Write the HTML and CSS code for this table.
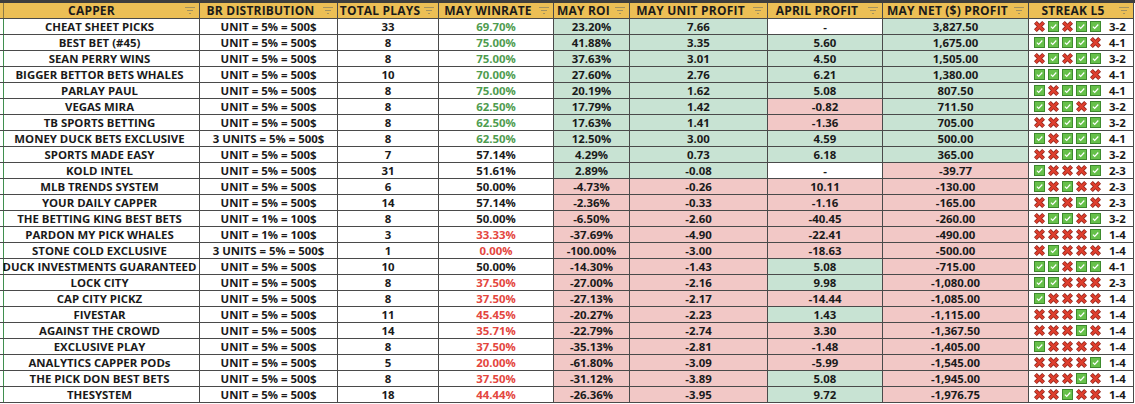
FILE: index.html
```html
<!DOCTYPE html>
<html>
<head>
<meta charset="utf-8">
<link rel="stylesheet" href="styles.css">
</head>
<body>
<svg class="defs" xmlns="http://www.w3.org/2000/svg">
  <symbol id="ck" viewBox="0 0 11 11">
    <rect x="0.5" y="0.5" width="10" height="10" fill="#66c04a" stroke="#3d8a2d"/>
    <path d="M2.9 5.7 L4.7 7.5 L8.3 3.5" fill="none" stroke="#ffffff" stroke-width="1.2"/>
  </symbol>
  <symbol id="xx" viewBox="0 0 11 11">
    <path d="M1.4 1.4 L9.6 9.6 M9.6 1.4 L1.4 9.6" stroke="#8a1f16" stroke-width="4"/>
    <path d="M1.7 1.7 L9.3 9.3 M9.3 1.7 L1.7 9.3" stroke="#de3f2e" stroke-width="2.6"/>
  </symbol>
  <symbol id="flt" viewBox="0 0 10 7">
    <path d="M0 0.5 H10 M2 3.5 H8 M4 6.5 H6" stroke="#a3925f" stroke-width="1"/>
  </symbol>
</svg>
<div class="topbar"></div>
<div class="sheet">
  <div class="row head">
    <div class="cell cap"><span class="lbl">CAPPER</span><svg class="flt"><use href="#flt"/></svg></div>
    <div class="cell"><span class="lbl">BR DISTRIBUTION</span><svg class="flt"><use href="#flt"/></svg></div>
    <div class="cell"><span class="lbl">TOTAL PLAYS</span><svg class="flt"><use href="#flt"/></svg></div>
    <div class="cell"><span class="lbl">MAY WINRATE</span><svg class="flt"><use href="#flt"/></svg></div>
    <div class="cell"><span class="lbl">MAY ROI</span><svg class="flt"><use href="#flt"/></svg></div>
    <div class="cell"><span class="lbl">MAY UNIT PROFIT</span><svg class="flt"><use href="#flt"/></svg></div>
    <div class="cell"><span class="lbl">APRIL PROFIT</span><svg class="flt"><use href="#flt"/></svg></div>
    <div class="cell"><span class="lbl">MAY NET ($) PROFIT</span><svg class="flt"><use href="#flt"/></svg></div>
    <div class="cell"><span class="lbl">STREAK L5</span><svg class="flt"><use href="#flt"/></svg></div>
  </div>

  <div class="row">
    <div class="cell cap">CHEAT SHEET PICKS</div><div class="cell">UNIT = 5% = 500$</div><div class="cell">33</div><div class="cell g">69.70%</div><div class="cell G">23.20%</div><div class="cell G">7.66</div><div class="cell">-</div><div class="cell G">3,827.50</div>
    <div class="cell streak"><svg class="ic"><use href="#xx"/></svg><svg class="ic"><use href="#ck"/></svg><svg class="ic"><use href="#xx"/></svg><svg class="ic"><use href="#ck"/></svg><svg class="ic"><use href="#ck"/></svg><span class="sc">3-2</span></div>
  </div>
  <div class="row">
    <div class="cell cap">BEST BET (#45)</div><div class="cell">UNIT = 5% = 500$</div><div class="cell">8</div><div class="cell g">75.00%</div><div class="cell G">41.88%</div><div class="cell G">3.35</div><div class="cell G">5.60</div><div class="cell G">1,675.00</div>
    <div class="cell streak"><svg class="ic"><use href="#ck"/></svg><svg class="ic"><use href="#ck"/></svg><svg class="ic"><use href="#ck"/></svg><svg class="ic"><use href="#ck"/></svg><svg class="ic"><use href="#xx"/></svg><span class="sc">4-1</span></div>
  </div>
  <div class="row">
    <div class="cell cap">SEAN PERRY WINS</div><div class="cell">UNIT = 5% = 500$</div><div class="cell">8</div><div class="cell g">75.00%</div><div class="cell G">37.63%</div><div class="cell G">3.01</div><div class="cell G">4.50</div><div class="cell G">1,505.00</div>
    <div class="cell streak"><svg class="ic"><use href="#xx"/></svg><svg class="ic"><use href="#ck"/></svg><svg class="ic"><use href="#xx"/></svg><svg class="ic"><use href="#ck"/></svg><svg class="ic"><use href="#ck"/></svg><span class="sc">3-2</span></div>
  </div>
  <div class="row">
    <div class="cell cap">BIGGER BETTOR BETS WHALES</div><div class="cell">UNIT = 5% = 500$</div><div class="cell">10</div><div class="cell g">70.00%</div><div class="cell G">27.60%</div><div class="cell G">2.76</div><div class="cell G">6.21</div><div class="cell G">1,380.00</div>
    <div class="cell streak"><svg class="ic"><use href="#ck"/></svg><svg class="ic"><use href="#ck"/></svg><svg class="ic"><use href="#ck"/></svg><svg class="ic"><use href="#ck"/></svg><svg class="ic"><use href="#xx"/></svg><span class="sc">4-1</span></div>
  </div>
  <div class="row">
    <div class="cell cap">PARLAY PAUL</div><div class="cell">UNIT = 5% = 500$</div><div class="cell">8</div><div class="cell g">75.00%</div><div class="cell G">20.19%</div><div class="cell G">1.62</div><div class="cell G">5.08</div><div class="cell G">807.50</div>
    <div class="cell streak"><svg class="ic"><use href="#ck"/></svg><svg class="ic"><use href="#xx"/></svg><svg class="ic"><use href="#ck"/></svg><svg class="ic"><use href="#ck"/></svg><svg class="ic"><use href="#ck"/></svg><span class="sc">4-1</span></div>
  </div>
  <div class="row">
    <div class="cell cap">VEGAS MIRA</div><div class="cell">UNIT = 5% = 500$</div><div class="cell">8</div><div class="cell g">62.50%</div><div class="cell G">17.79%</div><div class="cell G">1.42</div><div class="cell P">-0.82</div><div class="cell G">711.50</div>
    <div class="cell streak"><svg class="ic"><use href="#ck"/></svg><svg class="ic"><use href="#xx"/></svg><svg class="ic"><use href="#ck"/></svg><svg class="ic"><use href="#xx"/></svg><svg class="ic"><use href="#ck"/></svg><span class="sc">3-2</span></div>
  </div>
  <div class="row">
    <div class="cell cap">TB SPORTS BETTING</div><div class="cell">UNIT = 5% = 500$</div><div class="cell">8</div><div class="cell g">62.50%</div><div class="cell G">17.63%</div><div class="cell G">1.41</div><div class="cell P">-1.36</div><div class="cell G">705.00</div>
    <div class="cell streak"><svg class="ic"><use href="#xx"/></svg><svg class="ic"><use href="#xx"/></svg><svg class="ic"><use href="#ck"/></svg><svg class="ic"><use href="#ck"/></svg><svg class="ic"><use href="#ck"/></svg><span class="sc">3-2</span></div>
  </div>
  <div class="row">
    <div class="cell cap">MONEY DUCK BETS EXCLUSIVE</div><div class="cell">3 UNITS = 5% = 500$</div><div class="cell">8</div><div class="cell g">62.50%</div><div class="cell G">12.50%</div><div class="cell G">3.00</div><div class="cell G">4.59</div><div class="cell G">500.00</div>
    <div class="cell streak"><svg class="ic"><use href="#ck"/></svg><svg class="ic"><use href="#xx"/></svg><svg class="ic"><use href="#ck"/></svg><svg class="ic"><use href="#ck"/></svg><svg class="ic"><use href="#ck"/></svg><span class="sc">4-1</span></div>
  </div>
  <div class="row">
    <div class="cell cap">SPORTS MADE EASY</div><div class="cell">UNIT = 5% = 500$</div><div class="cell">7</div><div class="cell">57.14%</div><div class="cell G">4.29%</div><div class="cell G">0.73</div><div class="cell G">6.18</div><div class="cell G">365.00</div>
    <div class="cell streak"><svg class="ic"><use href="#xx"/></svg><svg class="ic"><use href="#xx"/></svg><svg class="ic"><use href="#ck"/></svg><svg class="ic"><use href="#ck"/></svg><svg class="ic"><use href="#ck"/></svg><span class="sc">3-2</span></div>
  </div>
  <div class="row">
    <div class="cell cap">KOLD INTEL</div><div class="cell">UNIT = 5% = 500$</div><div class="cell">31</div><div class="cell">51.61%</div><div class="cell G">2.89%</div><div class="cell G">-0.08</div><div class="cell">-</div><div class="cell P">-39.77</div>
    <div class="cell streak"><svg class="ic"><use href="#ck"/></svg><svg class="ic"><use href="#xx"/></svg><svg class="ic"><use href="#xx"/></svg><svg class="ic"><use href="#xx"/></svg><svg class="ic"><use href="#ck"/></svg><span class="sc">2-3</span></div>
  </div>
  <div class="row">
    <div class="cell cap">MLB TRENDS SYSTEM</div><div class="cell">UNIT = 5% = 500$</div><div class="cell">6</div><div class="cell">50.00%</div><div class="cell P">-4.73%</div><div class="cell P">-0.26</div><div class="cell P">10.11</div><div class="cell P">-130.00</div>
    <div class="cell streak"><svg class="ic"><use href="#ck"/></svg><svg class="ic"><use href="#xx"/></svg><svg class="ic"><use href="#ck"/></svg><svg class="ic"><use href="#xx"/></svg><svg class="ic"><use href="#xx"/></svg><span class="sc">2-3</span></div>
  </div>
  <div class="row">
    <div class="cell cap">YOUR DAILY CAPPER</div><div class="cell">UNIT = 5% = 500$</div><div class="cell">14</div><div class="cell">57.14%</div><div class="cell P">-2.36%</div><div class="cell P">-0.33</div><div class="cell P">-1.16</div><div class="cell P">-165.00</div>
    <div class="cell streak"><svg class="ic"><use href="#xx"/></svg><svg class="ic"><use href="#ck"/></svg><svg class="ic"><use href="#xx"/></svg><svg class="ic"><use href="#ck"/></svg><svg class="ic"><use href="#xx"/></svg><span class="sc">2-3</span></div>
  </div>
  <div class="row">
    <div class="cell cap">THE BETTING KING BEST BETS</div><div class="cell">UNIT = 1% = 100$</div><div class="cell">8</div><div class="cell">50.00%</div><div class="cell P">-6.50%</div><div class="cell P">-2.60</div><div class="cell P">-40.45</div><div class="cell P">-260.00</div>
    <div class="cell streak"><svg class="ic"><use href="#xx"/></svg><svg class="ic"><use href="#ck"/></svg><svg class="ic"><use href="#ck"/></svg><svg class="ic"><use href="#xx"/></svg><svg class="ic"><use href="#ck"/></svg><span class="sc">3-2</span></div>
  </div>
  <div class="row">
    <div class="cell cap">PARDON MY PICK WHALES</div><div class="cell">UNIT = 1% = 100$</div><div class="cell">3</div><div class="cell r">33.33%</div><div class="cell P">-37.69%</div><div class="cell P">-4.90</div><div class="cell P">-22.41</div><div class="cell P">-490.00</div>
    <div class="cell streak"><svg class="ic"><use href="#xx"/></svg><svg class="ic"><use href="#xx"/></svg><svg class="ic"><use href="#xx"/></svg><svg class="ic"><use href="#xx"/></svg><svg class="ic"><use href="#ck"/></svg><span class="sc">1-4</span></div>
  </div>
  <div class="row">
    <div class="cell cap">STONE COLD EXCLUSIVE</div><div class="cell">3 UNITS = 5% = 500$</div><div class="cell">1</div><div class="cell r">0.00%</div><div class="cell P">-100.00%</div><div class="cell P">-3.00</div><div class="cell P">-18.63</div><div class="cell P">-500.00</div>
    <div class="cell streak"><svg class="ic"><use href="#xx"/></svg><svg class="ic"><use href="#ck"/></svg><svg class="ic"><use href="#xx"/></svg><svg class="ic"><use href="#xx"/></svg><svg class="ic"><use href="#xx"/></svg><span class="sc">1-4</span></div>
  </div>
  <div class="row">
    <div class="cell cap">DUCK INVESTMENTS GUARANTEED</div><div class="cell">UNIT = 5% = 500$</div><div class="cell">10</div><div class="cell">50.00%</div><div class="cell P">-14.30%</div><div class="cell P">-1.43</div><div class="cell G">5.08</div><div class="cell P">-715.00</div>
    <div class="cell streak"><svg class="ic"><use href="#ck"/></svg><svg class="ic"><use href="#ck"/></svg><svg class="ic"><use href="#xx"/></svg><svg class="ic"><use href="#ck"/></svg><svg class="ic"><use href="#ck"/></svg><span class="sc">4-1</span></div>
  </div>
  <div class="row">
    <div class="cell cap">LOCK CITY</div><div class="cell">UNIT = 5% = 500$</div><div class="cell">8</div><div class="cell r">37.50%</div><div class="cell P">-27.00%</div><div class="cell P">-2.16</div><div class="cell G">9.98</div><div class="cell P">-1,080.00</div>
    <div class="cell streak"><svg class="ic"><use href="#ck"/></svg><svg class="ic"><use href="#ck"/></svg><svg class="ic"><use href="#xx"/></svg><svg class="ic"><use href="#xx"/></svg><svg class="ic"><use href="#xx"/></svg><span class="sc">2-3</span></div>
  </div>
  <div class="row">
    <div class="cell cap">CAP CITY PICKZ</div><div class="cell">UNIT = 5% = 500$</div><div class="cell">8</div><div class="cell r">37.50%</div><div class="cell P">-27.13%</div><div class="cell P">-2.17</div><div class="cell P">-14.44</div><div class="cell P">-1,085.00</div>
    <div class="cell streak"><svg class="ic"><use href="#ck"/></svg><svg class="ic"><use href="#xx"/></svg><svg class="ic"><use href="#xx"/></svg><svg class="ic"><use href="#xx"/></svg><svg class="ic"><use href="#xx"/></svg><span class="sc">1-4</span></div>
  </div>
  <div class="row">
    <div class="cell cap">FIVESTAR</div><div class="cell">UNIT = 5% = 500$</div><div class="cell">11</div><div class="cell r">45.45%</div><div class="cell P">-20.27%</div><div class="cell P">-2.23</div><div class="cell G">1.43</div><div class="cell P">-1,115.00</div>
    <div class="cell streak"><svg class="ic"><use href="#xx"/></svg><svg class="ic"><use href="#xx"/></svg><svg class="ic"><use href="#xx"/></svg><svg class="ic"><use href="#ck"/></svg><svg class="ic"><use href="#xx"/></svg><span class="sc">1-4</span></div>
  </div>
  <div class="row">
    <div class="cell cap">AGAINST THE CROWD</div><div class="cell">UNIT = 5% = 500$</div><div class="cell">14</div><div class="cell r">35.71%</div><div class="cell P">-22.79%</div><div class="cell P">-2.74</div><div class="cell P">3.30</div><div class="cell P">-1,367.50</div>
    <div class="cell streak"><svg class="ic"><use href="#xx"/></svg><svg class="ic"><use href="#xx"/></svg><svg class="ic"><use href="#xx"/></svg><svg class="ic"><use href="#ck"/></svg><svg class="ic"><use href="#xx"/></svg><span class="sc">1-4</span></div>
  </div>
  <div class="row">
    <div class="cell cap">EXCLUSIVE PLAY</div><div class="cell">UNIT = 5% = 500$</div><div class="cell">8</div><div class="cell r">37.50%</div><div class="cell P">-35.13%</div><div class="cell P">-2.81</div><div class="cell P">-1.48</div><div class="cell P">-1,405.00</div>
    <div class="cell streak"><svg class="ic"><use href="#ck"/></svg><svg class="ic"><use href="#xx"/></svg><svg class="ic"><use href="#xx"/></svg><svg class="ic"><use href="#xx"/></svg><svg class="ic"><use href="#xx"/></svg><span class="sc">1-4</span></div>
  </div>
  <div class="row">
    <div class="cell cap">ANALYTICS CAPPER PODs</div><div class="cell">UNIT = 5% = 500$</div><div class="cell">5</div><div class="cell r">20.00%</div><div class="cell P">-61.80%</div><div class="cell P">-3.09</div><div class="cell P">-5.99</div><div class="cell P">-1,545.00</div>
    <div class="cell streak"><svg class="ic"><use href="#xx"/></svg><svg class="ic"><use href="#xx"/></svg><svg class="ic"><use href="#xx"/></svg><svg class="ic"><use href="#xx"/></svg><svg class="ic"><use href="#ck"/></svg><span class="sc">1-4</span></div>
  </div>
  <div class="row">
    <div class="cell cap">THE PICK DON BEST BETS</div><div class="cell">UNIT = 5% = 500$</div><div class="cell">8</div><div class="cell r">37.50%</div><div class="cell P">-31.12%</div><div class="cell P">-3.89</div><div class="cell G">5.08</div><div class="cell P">-1,945.00</div>
    <div class="cell streak"><svg class="ic"><use href="#xx"/></svg><svg class="ic"><use href="#xx"/></svg><svg class="ic"><use href="#xx"/></svg><svg class="ic"><use href="#ck"/></svg><svg class="ic"><use href="#xx"/></svg><span class="sc">1-4</span></div>
  </div>
  <div class="row">
    <div class="cell cap">THESYSTEM</div><div class="cell">UNIT = 5% = 500$</div><div class="cell">18</div><div class="cell r">44.44%</div><div class="cell P">-26.36%</div><div class="cell P">-3.95</div><div class="cell G">9.72</div><div class="cell P">-1,976.75</div>
    <div class="cell streak"><svg class="ic"><use href="#xx"/></svg><svg class="ic"><use href="#xx"/></svg><svg class="ic"><use href="#ck"/></svg><svg class="ic"><use href="#xx"/></svg><svg class="ic"><use href="#xx"/></svg><span class="sc">1-4</span></div>
  </div>
</div>
</body>
</html>
```
FILE: styles.css
```css
html, body {
  margin: 0;
  padding: 0;
  background: #ffffff;
}
body {
  font-family: "Open Sans", "Liberation Sans", sans-serif;
  font-weight: 700;
  color: #1a1a1a;
  font-size: 11.4px;
}
.defs {
  position: absolute;
  width: 0;
  height: 0;
  overflow: hidden;
}
.topbar {
  height: 3px;
  background: #3d3d3d;
}
.sheet {
  width: 1135px;
}
.row {
  display: grid;
  grid-template-columns: 200px 138px 101px 115px 76px 138px 115px 146px 105px;
  height: 16px;
}
.cell {
  border-right: 1px solid #4a4a4a;
  border-bottom: 1px solid #4a4a4a;
  display: flex;
  align-items: center;
  justify-content: center;
  white-space: nowrap;
  overflow: hidden;
  line-height: 15px;
  min-width: 0;
}
.cap {
  background: linear-gradient(to right, transparent 3px, #3f8f4f 3px, #3f8f4f 4px, transparent 4px);
}
.head .cell {
  background-color: #ecbf55;
  font-size: 12px;
  color: #1b1b1b;
  letter-spacing: 0.2px;
}
.head .cap {
  background-image: linear-gradient(to right, transparent 3px, #8c7a45 3px, #8c7a45 4px, transparent 4px);
}
.lbl {
  flex: 1;
  text-align: center;
}
.flt {
  width: 10px;
  height: 7px;
  margin: 0 4px 0 2px;
  flex: none;
}
.g { color: #4f9c4f; }
.r { color: #e4463e; }
.G { background-color: #c8e3d3; }
.P { background-color: #f2c8c6; }
.streak {
  justify-content: flex-start;
  padding-left: 5px;
  gap: 3px;
}
.ic {
  width: 11px;
  height: 11px;
  flex: none;
}
.sc {
  margin-left: 5px;
}
```
